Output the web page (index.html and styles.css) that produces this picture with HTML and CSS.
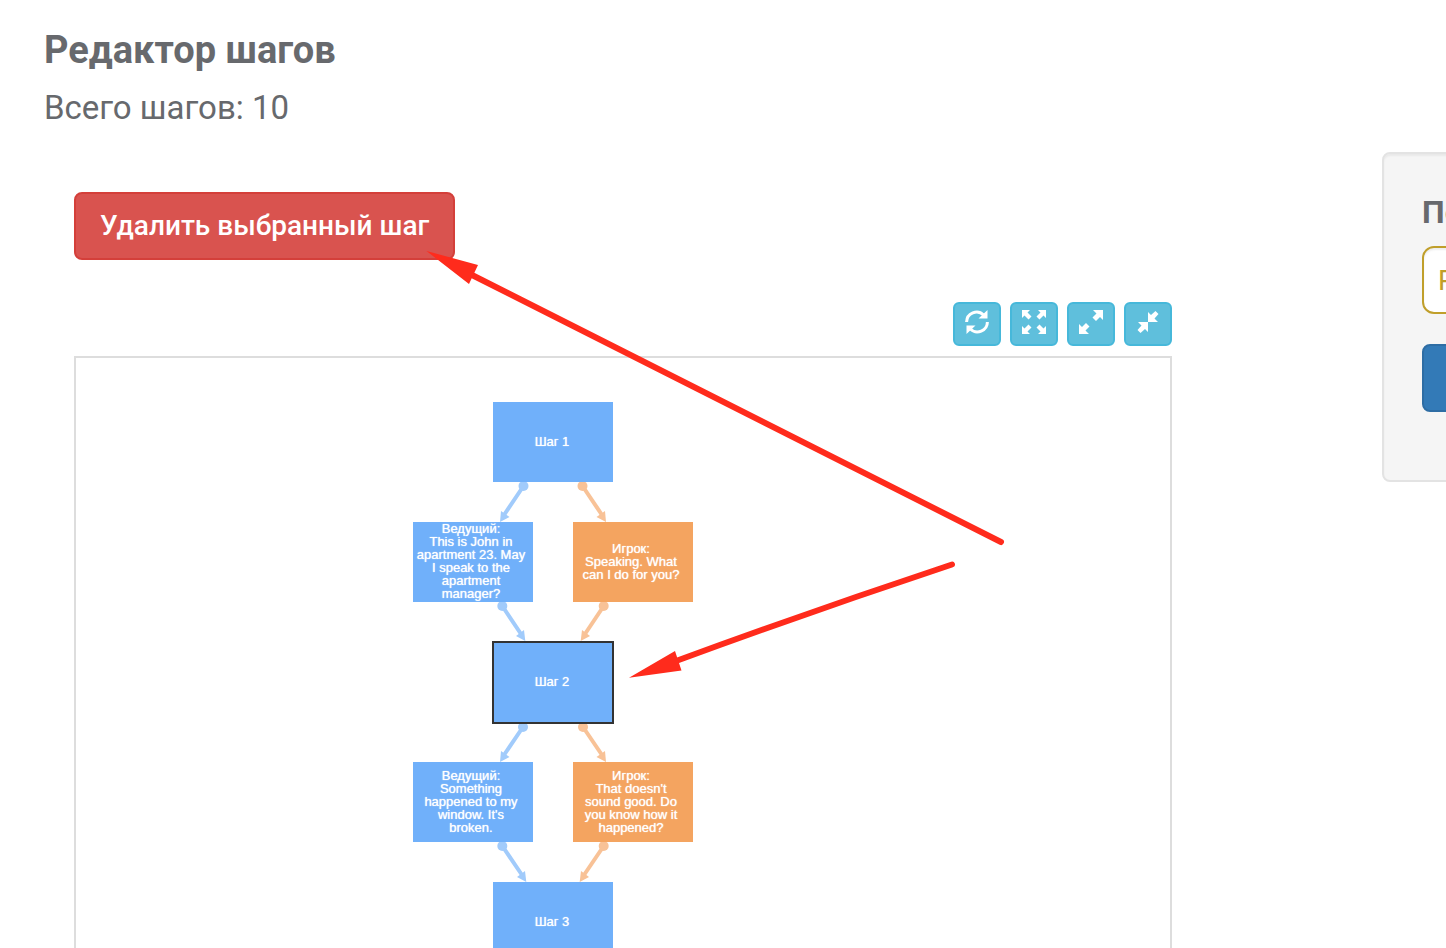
FILE: index.html
```html
<!DOCTYPE html>
<html lang="ru">
<head>
<meta charset="utf-8">
<title>Редактор шагов</title>
<link rel="stylesheet" href="styles.css">
</head>
<body>
<header class="head">
  <h1 class="head-title">Редактор шагов</h1>
  <p class="head-count">Всего шагов: 10</p>
</header>
<div class="layout">
  <main class="editor">
    <button class="btn btn-danger" type="button">Удалить выбранный шаг</button>
    <div class="toolbar">
      <button class="tool" type="button" aria-label="Обновить">
        <svg class="icon" viewBox="0 0 24 24"><path d="M1.600 12A10 10 0 0 1 18.600 5M22.400 12A10 10 0 0 1 5.400 19" fill="none" stroke="#fff" stroke-width="3"/><path d="M22.500 0V8.500H13.500ZM1.500 24V15.500H10.500Z"/></svg>
      </button>
      <button class="tool" type="button" aria-label="На весь экран">
        <svg class="icon" viewBox="0 0 24 24"><path d="M0 0H8L5.500 2.500L9.500 6.500L6.500 9.500L2.500 5.500L0 8ZM24 0V8L21.500 5.500L17.500 9.500L14.500 6.500L18.500 2.500L16 0ZM0 24V16L2.500 18.500L6.500 14.500L9.500 17.500L5.500 21.500L8 24ZM24 24H16L18.500 21.500L14.500 17.500L17.500 14.500L21.500 18.500L24 16Z"/></svg>
      </button>
      <button class="tool" type="button" aria-label="Увеличить">
        <svg class="icon" viewBox="0 0 24 24"><path d="M24 0V10L21 7L17 11L13.500 7.500L17.500 3.500L14 0ZM0 24V14L3 17L7 13L10.500 16.500L6.500 20.500L10 24Z"/></svg>
      </button>
      <button class="tool" type="button" aria-label="Уменьшить">
        <svg class="icon" viewBox="0 0 24 24"><path d="M12 12V2L15 5L19.500 1L22.500 4L18.500 8.500L22 12ZM12 12V22L9 19L4.500 23L1.500 20L5.500 15.500L2 12Z"/></svg>
      </button>
    </div>
    <section class="canvas">
      <div class="stage">
        <svg class="edges" viewBox="0 0 280 600" aria-hidden="true">
          <g class="links">
            <path d="M110.500 84L91 113M89.300 204L108 232M110 325L91 353M89.300 444L109 473"/>
            <g class="caps">
              <circle cx="110.500" cy="84" r="5"/><circle cx="89.300" cy="204" r="5"/><circle cx="110" cy="325" r="5"/><circle cx="89.300" cy="444" r="5"/>
              <path d="M87 120L88 109L96.500 115ZM112.300 239L103 234L111 228ZM87 360L88 349L96.500 355ZM113.300 480L104 475L112 469Z"/>
            </g>
          </g>
          <g class="links links-player" transform="matrix(-1 0 0 1 280 0)">
            <path d="M110.500 84L91 113M89.300 204L108 232M110 325L91 353M89.300 444L109 473"/>
            <g class="caps">
              <circle cx="110.500" cy="84" r="5"/><circle cx="89.300" cy="204" r="5"/><circle cx="110" cy="325" r="5"/><circle cx="89.300" cy="444" r="5"/>
              <path d="M87 120L88 109L96.500 115ZM112.300 239L103 234L111 228ZM87 360L88 349L96.500 355ZM113.300 480L104 475L112 469Z"/>
            </g>
          </g>
        </svg>
        <div class="node step row-1">Шаг 1</div>
        <div class="node host row-2">Ведущий:<br>This is John in<br>apartment 23. May<br>I speak to the<br>apartment<br>manager?</div>
        <div class="node player row-2">Игрок:<br>Speaking. What<br>can I do for you?</div>
        <div class="node step row-3 selected">Шаг 2</div>
        <div class="node host row-4">Ведущий:<br>Something<br>happened to my<br>window. It's<br>broken.</div>
        <div class="node player row-4">Игрок:<br>That doesn't<br>sound good. Do<br>you know how it<br>happened?</div>
        <div class="node step row-5">Шаг 3</div>
      </div>
    </section>
  </main>
  <aside class="side">
    <form class="panel">
      <label class="panel-label" for="field">По</label>
      <input class="panel-input" id="field" type="text" value="Р">
      <button class="btn btn-primary" type="button" aria-label="Сохранить"></button>
    </form>
  </aside>
</div>
<svg class="pointers" width="1446" height="948" viewBox="0 0 1446 948" aria-hidden="true">
  <path d="M1001 542L472 275M952 564.500Q812 611 676 661" fill="none" stroke="#ff2b1c" stroke-width="6" stroke-linecap="round"/>
  <path d="M426.500 251L478 265L469 284ZM629 677.700L675 651L681.500 670.500Z" fill="#ff2b1c"/>
</svg>
</body>
</html>
```
FILE: styles.css
```css
* { box-sizing: border-box; }

body {
  margin: 0;
  height: 100vh;
  display: flex;
  flex-direction: column;
  position: relative;
  overflow: hidden;
  background: #fff;
  color: #67696d;
  font-family: Roboto, "Liberation Sans", sans-serif;
}

.head { padding: 28px 44px 24px; }
.head-title { margin: 0 0 16px; font-size: 38px; line-height: 44px; font-weight: 700; }
.head-count { margin: 0; font-size: 33px; line-height: 40px; }

.layout {
  flex: 1;
  min-height: 0;
  display: grid;
  grid-template-columns: minmax(0, 1fr) 64px;
  column-gap: 210px;
}

.editor {
  display: flex;
  flex-direction: column;
  align-items: flex-start;
  min-height: 0;
  padding: 40px 0 0 74px;
}

.btn {
  height: 68px;
  padding: 0 24px;
  border: 2px solid;
  border-radius: 8px;
  color: #fff;
  font: 500 28px/40px Roboto, "Liberation Sans", sans-serif;
}
.btn-danger { background: #d9534f; border-color: #d43f3a; }
.btn-primary { width: 100%; background: #337ab7; border-color: #2e6da4; }

.toolbar {
  align-self: stretch;
  display: flex;
  justify-content: flex-end;
  gap: 9px;
  margin: 42px 0 10px;
}
.tool {
  display: flex;
  justify-content: center;
  align-items: flex-start;
  width: 48px;
  height: 44px;
  padding: 6px 0 0;
  border: 2px solid #46b8da;
  border-radius: 6px;
  background: #5fbfdc;
}
.icon { width: 24px; height: 24px; fill: #fff; }

.canvas {
  flex: 1;
  align-self: stretch;
  min-height: 0;
  overflow: hidden;
  border: 2px solid #ddd;
  border-bottom: 0;
  padding: 44px 0 0 337px;
}
.stage { position: relative; width: 280px; height: 600px; }
.edges { position: absolute; inset: 0; width: 280px; height: 600px; }
.links { fill: none; stroke: #a1cbfb; stroke-width: 4; }
.caps { stroke: none; fill: #a1cbfb; }
.links-player { stroke: #f8c297; }
.links-player .caps { fill: #f8c297; }

.node {
  position: absolute;
  display: grid;
  place-content: center;
  width: 120px;
  height: 80px;
  padding: 0 4px 2px 0;
  color: #fff;
  background: #70b0fa;
  text-align: center;
  white-space: nowrap;
  font: 13px/13px "Liberation Sans", sans-serif;
  text-shadow: 0 0 1px #fff;
}
.step { left: 80px; padding-right: 2px; }
.host { left: 0; }
.player { left: 160px; background: #f4a460; }
.row-1 { top: 0; }
.row-2 { top: 120px; }
.row-3 { top: 240px; }
.row-4 { top: 360px; }
.row-5 { top: 480px; }
.selected {
  left: 79px;
  top: 239px;
  width: 122px;
  height: 83px;
  border: 2px solid #333;
}

.side { min-width: 0; overflow: hidden; }
.panel {
  display: flex;
  flex-direction: column;
  width: 420px;
  height: 330px;
  padding: 38px;
  border: 2px solid #e3e3e3;
  border-radius: 8px;
  background: #f5f5f5;
  box-shadow: inset 0 2px 2px rgba(0, 0, 0, 0.05);
}
.panel-label { font-size: 32px; line-height: 40px; font-weight: 700; margin-bottom: 14px; }
.panel-input {
  width: 100%;
  height: 68px;
  margin-bottom: 30px;
  padding: 0 14px;
  border: 2px solid #c09f2b;
  border-radius: 12px;
  background: #fff;
  box-shadow: inset 0 2px 2px rgba(0, 0, 0, 0.07);
  color: #c09f2b;
  font: 28px/40px Roboto, "Liberation Sans", sans-serif;
}

.pointers { position: absolute; left: 0; top: 0; pointer-events: none; }
```
